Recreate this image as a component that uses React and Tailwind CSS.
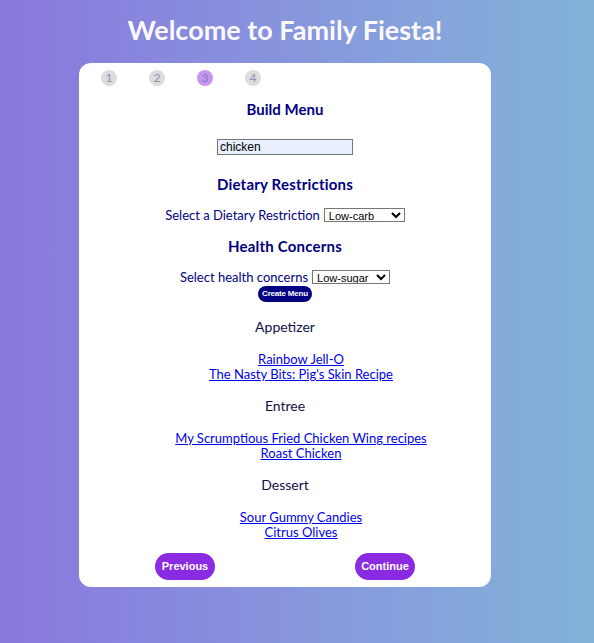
import React from "react";

const trebu = { fontFamily: '"Lato", "DejaVu Sans", sans-serif' };

function Step({ n, active }) {
  return (
    <div
      className={`w-[16px] h-[16px] rounded-full flex items-center justify-center text-[12px] leading-none ${
        active ? "bg-[#c595f0] text-[#8a76c8]" : "bg-[#dcdcdc] text-[#8f8fb0]"
      }`}
    >
      {n}
    </div>
  );
}

function Links({ items }) {
  return (
    <div className="flex flex-col items-center text-[13px] leading-[15px] pl-[32px]">
      {items.map((t) => (
        <a key={t} href="#" className="text-[#0000ee] underline">
          {t}
        </a>
      ))}
    </div>
  );
}

export default function App() {
  return (
    <div
      className="min-h-[643px] w-full bg-gradient-to-r from-[#8977de] to-[#82b3d9]"
      style={trebu}
    >
      <div className="w-[570px] flex flex-col items-center">
        <h1 className="text-[#fbf8ff] font-bold text-[27px] leading-[32px] pt-[14px] h-[63px]">
          Welcome to Family Fiesta!
        </h1>
        <div className="w-[412px] h-[524px] bg-white rounded-[12px] flex flex-col items-center text-[#000080]">
          <div className="w-full flex gap-[32px] pl-[22px] pt-[7px]">
            <Step n={1} />
            <Step n={2} />
            <Step n={3} active />
            <Step n={4} />
          </div>
          <h2 className="font-bold text-[15px] leading-[18px] mt-[14px]">Build Menu</h2>
          <input
            defaultValue="chicken"
            className="mt-[21px] w-[136px] h-[16px] bg-[#e8f0fe] border border-[#767676] text-[12px] leading-[14px] px-[2px] text-black"
            style={{ fontFamily: '"Liberation Sans", Arial, sans-serif' }}
          />
          <h2 className="font-bold text-[15px] leading-[18px] mt-[20px] tracking-[0.2px]">Dietary Restrictions</h2>
          <div className="mt-[14px] flex items-center text-[13px] leading-[16px]">
            <span>Select a Dietary Restriction</span>
            <select
              defaultValue="Low-carb"
              className="ml-[4px] w-[81px] h-[14px] border border-[#767676] text-[11px] leading-[12px] text-black"
              style={{ fontFamily: '"Liberation Sans", Arial, sans-serif' }}
            >
              <option>Low-carb</option>
            </select>
          </div>
          <h2 className="font-bold text-[15px] leading-[18px] mt-[14px] tracking-[0.2px]">Health Concerns</h2>
          <div className="mt-[14px] flex items-center text-[13px] leading-[16px]">
            <span>Select health concerns</span>
            <select
              defaultValue="Low-sugar"
              className="ml-[4px] w-[78px] h-[14px] border border-[#767676] text-[11px] leading-[12px] text-black"
              style={{ fontFamily: '"Liberation Sans", Arial, sans-serif' }}
            >
              <option>Low-sugar</option>
            </select>
          </div>
          <button
            className="mt-[1px] h-[16px] px-[4px] rounded-full bg-[#000080] text-white text-[8px] font-bold tracking-[-0.2px]"
            style={{ fontFamily: '"Liberation Sans", Arial, sans-serif' }}
          >
            Create Menu
          </button>
          <h3 className="text-[14px] leading-[16px] mt-[17px] text-[#10104a]">Appetizer</h3>
          <div className="mt-[17px]">
            <Links items={["Rainbow Jell-O", "The Nasty Bits: Pig's Skin Recipe"]} />
          </div>
          <h3 className="text-[14px] leading-[16px] mt-[16px] text-[#10104a]">Entree</h3>
          <div className="mt-[17px]">
            <Links items={["My Scrumptious Fried Chicken Wing recipes", "Roast Chicken"]} />
          </div>
          <h3 className="text-[14px] leading-[16px] mt-[16px] text-[#10104a]">Dessert</h3>
          <div className="mt-[17px]">
            <Links items={["Sour Gummy Candies", "Citrus Olives"]} />
          </div>
          <div
            className="mt-[13px] flex gap-[140px]"
            style={{ fontFamily: '"Liberation Sans", Arial, sans-serif' }}
          >
            <button className="w-[60px] h-[27px] rounded-full bg-[#8a2be2] text-white text-[11px] font-bold">
              Previous
            </button>
            <button className="w-[60px] h-[27px] rounded-full bg-[#8a2be2] text-white text-[11px] font-bold">
              Continue
            </button>
          </div>
        </div>
      </div>
    </div>
  );
}
